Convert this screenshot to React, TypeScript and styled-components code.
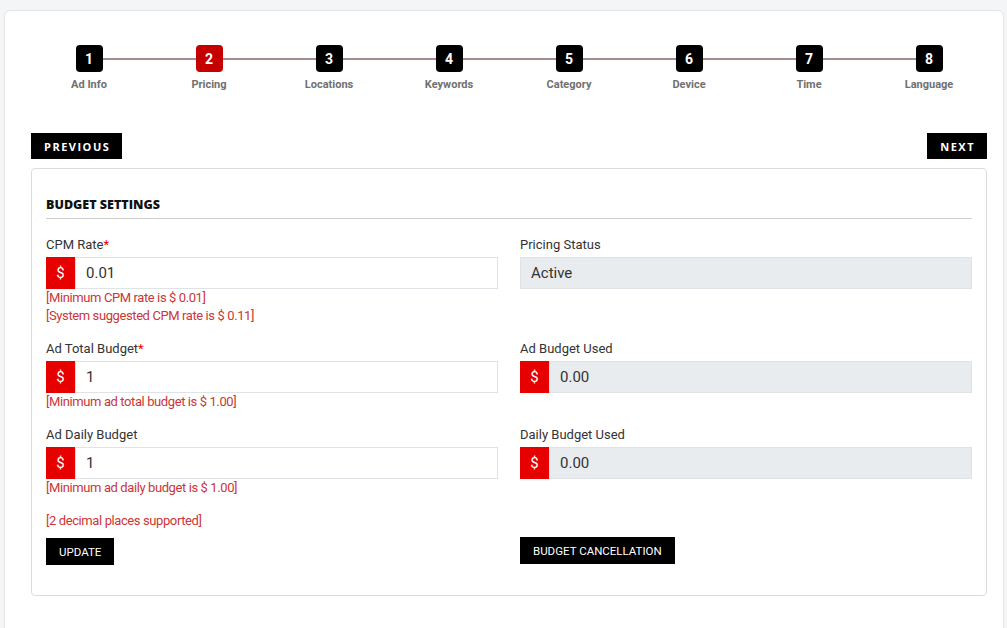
import * as React from "react";
import styled, { createGlobalStyle } from "styled-components";

const GlobalStyle = createGlobalStyle`
  html, body {
    margin: 0;
    padding: 0;
    background: #f4f5f7;
    font-family: Roboto, "Liberation Sans", sans-serif;
  }
  * { box-sizing: border-box; }
`;

const RED = "#e60000";
const HELP_RED = "#cc3636";

const Page = styled.div`
  padding: 10px 3px 0 4px;
  height: 628px;
  overflow: hidden;
`;

const Shell = styled.div`
  background: #fff;
  border: 1px solid #e4e4e4;
  border-radius: 6px;
  min-height: 640px;
  padding: 34px 16px 0 25px;
`;

const Stepper = styled.ol`
  position: relative;
  display: flex;
  list-style: none;
  margin: 0 -2px 0 -1px;
  padding: 0;

  &::before {
    content: "";
    position: absolute;
    left: 60px;
    right: 60px;
    top: 13px;
    height: 2px;
    background: #a58d8d;
  }
`;

const Step = styled.li`
  position: relative;
  flex: 1;
  display: flex;
  flex-direction: column;
  align-items: center;
`;

const StepBox = styled.span<{ $active?: boolean }>`
  width: 27px;
  height: 27px;
  border-radius: 4px;
  background: ${(p) => (p.$active ? "#c40000" : "#000")};
  color: #fff;
  font-size: 14px;
  font-weight: 700;
  display: flex;
  align-items: center;
  justify-content: center;
`;

const StepLabel = styled.span`
  margin-top: 6px;
  font-size: 11px;
  font-weight: 700;
  color: #707070;
  line-height: 14px;
`;

const NavRow = styled.div`
  display: flex;
  justify-content: space-between;
  margin-top: 41px;
  padding-left: 1px;
`;

const NavButton = styled.button`
  height: 26px;
  padding: 0 12px 0 13px;
  background: #000;
  color: #fff;
  border: 0;
  font-family: "Open Sans", "Liberation Sans", sans-serif;
  font-size: 11px;
  font-weight: 700;
  letter-spacing: 1.5px;
  text-transform: uppercase;
`;

const Card = styled.section`
  margin: 9px 0 0 1px;
  border: 1px solid #dcdcdc;
  border-radius: 4px;
  padding: 28px 14px 30px 14px;
`;

const CardTitle = styled.h2`
  margin: 0;
  font-family: "Open Sans", "Liberation Sans", sans-serif;
  font-size: 12.5px;
  font-weight: 800;
  color: #111;
  line-height: 16px;
  padding-bottom: 5px;
  border-bottom: 1px solid #cfcfcf;
`;

const Form = styled.div`
  margin-top: 17px;
  display: flex;
  flex-direction: column;
  gap: 15px;
`;

const Row = styled.div`
  display: grid;
  grid-template-columns: 1fr 1fr;
  column-gap: 22px;
  align-items: start;
`;

const Field = styled.div`
  display: flex;
  flex-direction: column;
`;

const Label = styled.label`
  font-size: 13px;
  color: #333;
  line-height: 18px;
  margin-bottom: 3px;
`;

const Req = styled.span`
  color: ${RED};
`;

const InputGroup = styled.div`
  display: flex;
  height: 32px;
`;

const Addon = styled.span`
  width: 29px;
  flex: none;
  background: ${RED};
  color: #fff;
  font-size: 15px;
  display: flex;
  align-items: center;
  justify-content: center;
`;

const Input = styled.input<{ $readOnly?: boolean }>`
  flex: 1;
  min-width: 0;
  height: 32px;
  border: 1px solid #dfe3e8;
  background: ${(p) => (p.$readOnly ? "#e9ecef" : "#fff")};
  padding: 0 10px;
  font-family: Roboto, "Liberation Sans", sans-serif;
  font-size: 15px;
  color: #333;
  outline: none;
`;

const Help = styled.div`
  font-size: 13px;
  letter-spacing: -0.4px;
  line-height: 18px;
  color: ${HELP_RED};
`;

const FootRow = styled(Row)`
  align-items: end;
`;

const ActionButton = styled.button`
  height: 27px;
  padding: 0 13px;
  background: #000;
  color: #fff;
  border: 0;
  font-family: Roboto, "Liberation Sans", sans-serif;
  font-size: 11.5px;
  font-weight: 400;
  text-transform: uppercase;
`;

const LeftFoot = styled.div`
  display: flex;
  flex-direction: column;
  align-items: flex-start;
  gap: 8px;
`;

const RightFoot = styled.div`
  padding-bottom: 1px;
`;

const steps = [
  "Ad Info",
  "Pricing",
  "Locations",
  "Keywords",
  "Category",
  "Device",
  "Time",
  "Language",
];

interface MoneyProps {
  value: string;
  readOnly?: boolean;
  prefix?: boolean;
}

const Money: React.FunctionComponent<MoneyProps> = ({
  value,
  readOnly,
  prefix = true,
}) => (
  <InputGroup>
    {prefix && <Addon>$</Addon>}
    <Input defaultValue={value} readOnly={readOnly} $readOnly={readOnly} />
  </InputGroup>
);

export default function App() {
  return (
    <Page>
      <GlobalStyle />
      <Shell>
        <Stepper>
          {steps.map((s, i) => (
            <Step key={s}>
              <StepBox $active={i === 1}>{i + 1}</StepBox>
              <StepLabel>{s}</StepLabel>
            </Step>
          ))}
        </Stepper>

        <NavRow>
          <NavButton>Previous</NavButton>
          <NavButton>Next</NavButton>
        </NavRow>

        <Card>
          <CardTitle>BUDGET SETTINGS</CardTitle>
          <Form>
            <Row>
              <Field>
                <Label>
                  CPM Rate<Req>*</Req>
                </Label>
                <Money value="0.01" />
                <Help>[Minimum CPM rate is $ 0.01]</Help>
                <Help>[System suggested CPM rate is $ 0.11]</Help>
              </Field>
              <Field>
                <Label>Pricing Status</Label>
                <Money value="Active" readOnly prefix={false} />
              </Field>
            </Row>

            <Row>
              <Field>
                <Label>
                  Ad Total Budget<Req>*</Req>
                </Label>
                <Money value="1" />
                <Help>[Minimum ad total budget is $ 1.00]</Help>
              </Field>
              <Field>
                <Label>Ad Budget Used</Label>
                <Money value="0.00" readOnly />
              </Field>
            </Row>

            <Row>
              <Field>
                <Label>Ad Daily Budget</Label>
                <Money value="1" />
                <Help>[Minimum ad daily budget is $ 1.00]</Help>
              </Field>
              <Field>
                <Label>Daily Budget Used</Label>
                <Money value="0.00" readOnly />
              </Field>
            </Row>

            <FootRow>
              <LeftFoot>
                <Help>[2 decimal places supported]</Help>
                <ActionButton>Update</ActionButton>
              </LeftFoot>
              <RightFoot>
                <ActionButton>Budget Cancellation</ActionButton>
              </RightFoot>
            </FootRow>
          </Form>
        </Card>
      </Shell>
    </Page>
  );
}
